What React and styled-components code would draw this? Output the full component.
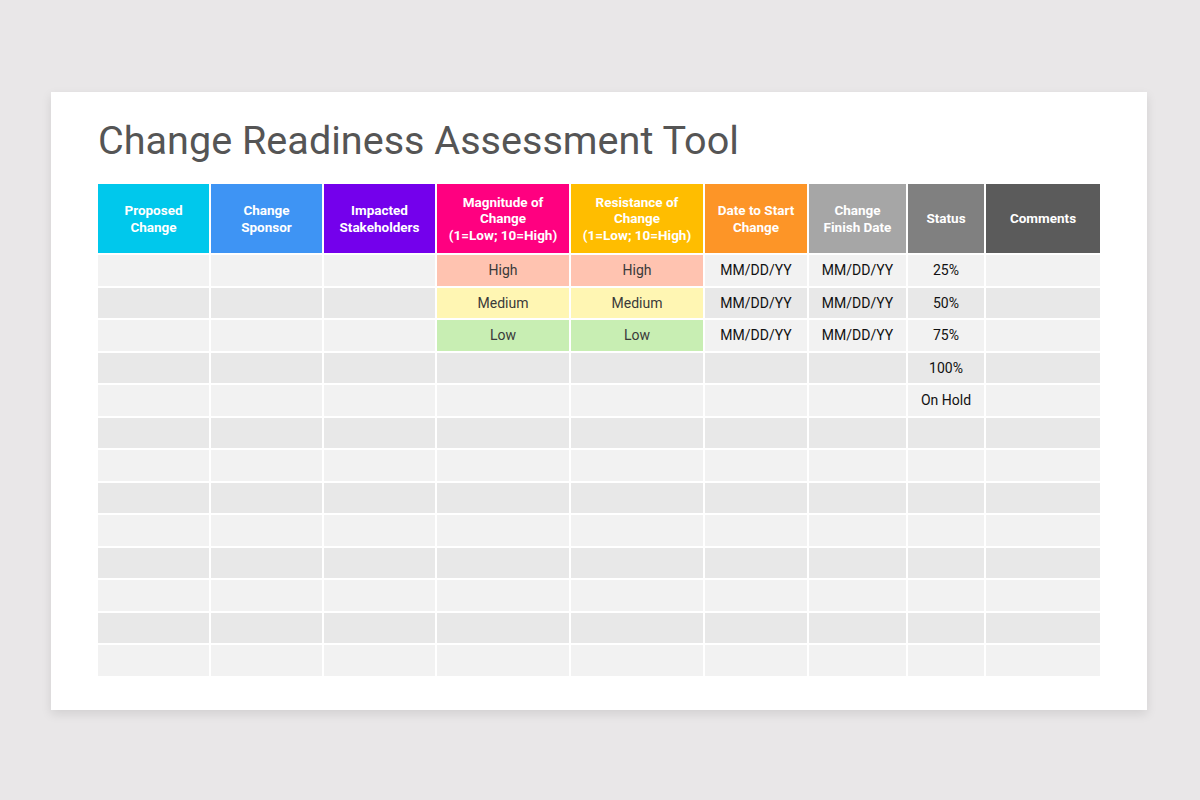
import React from "react";
import styled, { createGlobalStyle } from "styled-components";

const GlobalStyle = createGlobalStyle`
  html, body {
    margin: 0;
    padding: 0;
    background: #e9e7e8;
    font-family: Roboto, "Liberation Sans", sans-serif;
  }
`;

const Page = styled.div`
  width: 1200px;
  height: 800px;
  padding: 92px 0 0 51px;
  box-sizing: border-box;
`;

const Card = styled.div`
  width: 1096px;
  height: 618px;
  background: #fff;
  box-shadow: 0 4px 10px rgba(0, 0, 0, 0.1);
  padding: 24px 0 0 47px;
  box-sizing: border-box;
`;

const Title = styled.h1`
  margin: 0 0 18px 0;
  font-size: 39.6px;
  font-weight: 400;
  line-height: 50px;
  color: #555;
`;

const Grid = styled.div`
  display: grid;
  grid-template-columns: 111px 111px 111px 132px 132px 102px 97px 76px 114px;
  grid-template-rows: 69px;
  grid-auto-rows: 30.5px;
  gap: 2px;
  width: 1002px;
`;

const HeadCell = styled.div`
  background: ${(p) => p.$bg};
  color: #fff;
  font-weight: 700;
  font-size: 13.5px;
  line-height: 16.5px;
  display: flex;
  align-items: center;
  justify-content: center;
  text-align: center;
  white-space: pre-line;
`;

const Cell = styled.div`
  background: ${(p) => p.$bg || (p.$odd ? "#e8e8e8" : "#f2f2f2")};
  color: ${(p) => (p.$bg ? "#3a3a3a" : "#111")};
  font-size: 14px;
  display: flex;
  align-items: center;
  justify-content: center;
`;

const headers = [
  ["Proposed\nChange", "#00c8ec"],
  ["Change\nSponsor", "#3e94f4"],
  ["Impacted\nStakeholders", "#7400ec"],
  ["Magnitude of\nChange\n(1=Low; 10=High)", "#ff0080"],
  ["Resistance of\nChange\n(1=Low; 10=High)", "#ffbd00"],
  ["Date to Start\nChange", "#fd9527"],
  ["Change\nFinish Date", "#a6a6a6"],
  ["Status", "#808080"],
  ["Comments", "#5b5b5b"],
];

const levels = [
  ["High", "#ffc3b0"],
  ["Medium", "#fff6b3"],
  ["Low", "#c8eeb3"],
];

const statuses = ["25%", "50%", "75%", "100%", "On Hold"];

function rowCells(i) {
  const level = levels[i];
  return [
    null,
    null,
    null,
    level ? level : null,
    level ? level : null,
    i < 3 ? ["MM/DD/YY"] : null,
    i < 3 ? ["MM/DD/YY"] : null,
    statuses[i] ? [statuses[i]] : null,
    null,
  ];
}

export default function App() {
  const rows = Array.from({ length: 13 }, (_, i) => i);
  return (
    <Page>
      <GlobalStyle />
      <Card>
        <Title>Change Readiness Assessment Tool</Title>
        <Grid>
          {headers.map(([label, bg]) => (
            <HeadCell key={label} $bg={bg}>
              {label}
            </HeadCell>
          ))}
          {rows.map((i) =>
            rowCells(i).map((c, j) => (
              <Cell key={`${i}-${j}`} $odd={i % 2 === 1} $bg={c && c[1]}>
                {c ? c[0] : ""}
              </Cell>
            ))
          )}
        </Grid>
      </Card>
    </Page>
  );
}
